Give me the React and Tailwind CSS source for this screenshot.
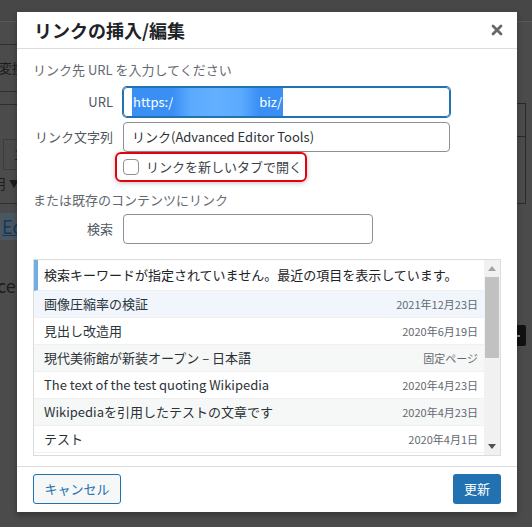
export default function App() {
  const rows = [
    { t: "画像圧縮率の検証", d: "2021年12月23日", bg: "bg-[#f0f6fc]" },
    { t: "見出し改造用", d: "2020年6月19日", bg: "bg-white" },
    { t: "現代美術館が新装オープン – 日本語", d: "固定ページ", bg: "bg-[#f6f7f7]" },
    { t: "The text of the test quoting Wikipedia", d: "2020年4月23日", bg: "bg-white" },
    { t: "Wikipediaを引用したテストの文章です", d: "2020年4月23日", bg: "bg-[#f6f7f7]" },
    { t: "テスト", d: "2020年4月1日", bg: "bg-white" },
  ];
  const font = "font-['Noto_Sans_CJK_JP','Noto_Sans',sans-serif]";
  return (
    <div className={`relative w-[532px] h-[527px] overflow-hidden bg-[#4b4b4b] ${font}`}>
      {/* dimmed editor background */}
      <div className="h-[22px] border-b border-[#5a5a5a] bg-[#474747]" />
      <div className="flex">
        <div className="w-[260px] flex flex-col">
          <div className="h-[23px] border-b border-[#2e2e2e]" />
          <div className="h-[47px] border-b border-[#2e2e2e] flex items-center">
            <span className="ml-[-1px] text-[13px] text-[#1c1c1c]">変換</span>
          </div>
          <div className="h-[13px] border-b border-[#2e2e2e]" />
          <div className="h-[34px]" />
          <div className="ml-[3px] h-[31px] w-[60px] border border-[#3c3c3c] flex items-center pl-[10px] text-[13px] text-[#1c1c1c]">
            1
          </div>
          <div className="h-[26px] flex items-center text-[14px] text-[#1c1c1c]">
            <span className="ml-[-8px]">用</span>
            <span className="ml-[3px] text-[10px]">▼</span>
          </div>
          <div className="h-[8px] border-b border-[#2e2e2e]" />
          <div className="mt-[9px] h-[27px] w-[40px] bg-[#4a5761] flex items-center">
            <span className="ml-[2px] text-[18px] text-[#173858] underline">Ed</span>
          </div>
          <div className="mt-[32px] text-[18px] text-[#1c1c1c] ml-[-3px]">ce</div>
        </div>
        <div className="flex-1 flex flex-col items-end">
          <div className="mt-[81px] mr-[6px] w-[80px] h-[101px] border border-[#2a2a2a] flex flex-col">
            <div className="h-[33px] border-b border-[#2a2a2a]" />
          </div>
          <div className="mt-[121px] mr-[6px] w-[30px] h-[21px] bg-[#111] rounded-[2px] flex items-center justify-end pr-[6px]">
            <span className="block w-[4px] h-[2px] bg-[#8a8a8a]" />
          </div>
        </div>
      </div>

      {/* modal */}
      <div className="absolute left-[17px] top-[12px] w-[500px] h-[500px] bg-white shadow-[0_3px_6px_rgba(0,0,0,0.3)] flex flex-col">
        <div className="h-[37px] shrink-0 border-b border-[#dcdcde] flex items-center justify-between pl-[17px] pr-[13px]">
          <h1 className="text-[18px] font-bold text-[#1d2327] leading-none">リンクの挿入/編集</h1>
          <svg width="14" height="14" viewBox="0 0 14 14">
            <path d="M3 3 L11 11 M11 3 L3 11" stroke="#646970" strokeWidth="2.8" strokeLinecap="round" />
          </svg>
        </div>

        <div className="flex-1 px-[16px] flex flex-col">
          <p className="mt-[11px] text-[13px] leading-[20px] text-[#646970]">リンク先 URL を入力してください</p>

          <div className="mt-[7px] flex items-center">
            <span className="w-[80px] text-right text-[13px] text-[#50575e]">URL</span>
            <div className="ml-[10px] w-[327px] h-[30px] rounded-[4px] border border-[#2271b1] shadow-[0_0_0_1px_#2271b1] flex items-center pl-[7px] text-[13px] text-white">
              <span className="w-[1px] h-[26px] bg-white" />
              <span className="h-[28px] flex items-center bg-[#3a8ff5] pl-[1px]">https:/</span>
              <span className="h-[28px] w-[86px] bg-[linear-gradient(90deg,#3a8ff5,#5aaaff_20%,#63b0ff_50%,#5aaaff_80%,#3a8ff5)]" />
              <span className="h-[28px] flex items-center bg-[#3a8ff5] pr-[1px]">biz/</span>
            </div>
          </div>

          <div className="mt-[5px] flex items-center">
            <span className="w-[80px] text-right text-[13px] text-[#50575e]">リンク文字列</span>
            <div className="ml-[10px] w-[327px] h-[30px] rounded-[4px] border border-[#8c8f94] flex items-center pl-[8px] text-[13px] text-[#2c3338]">
              リンク(Advanced Editor Tools)
            </div>
          </div>

          <div className="ml-[82px] w-[192px] h-[30px] rounded-[6px] border-2 border-[#e3000f] shadow-[0_1px_5px_rgba(0,0,0,0.25)] flex items-center pl-[6px]">
            <span className="w-[16px] h-[16px] rounded-[4px] border border-[#8c8f94] bg-white" />
            <span className="ml-[7px] text-[13px] text-[#3c434a]">リンクを新しいタブで開く</span>
          </div>

          <p className="mt-[8px] text-[13px] leading-[20px] text-[#646970]">または既存のコンテンツにリンク</p>

          <div className="mt-[4px] flex items-center">
            <span className="w-[80px] text-right text-[13px] text-[#50575e]">検索</span>
            <div className="ml-[10px] w-[250px] h-[30px] rounded-[4px] border border-[#8c8f94]" />
          </div>

          <div className="mt-[15px] w-[468px] h-[197px] border border-[#dcdcde] flex overflow-hidden bg-white">
            <div className="flex-1 flex flex-col">
              <div className="h-[31px] shrink-0 border-b border-[#f0f0f1] border-l-4 border-l-[#72aee6] flex items-center pl-[6px] text-[13px] text-[#1d2327] bg-white">
                検索キーワードが指定されていません。最近の項目を表示しています。
              </div>
              {rows.map((r) => (
                <div
                  key={r.t}
                  className={`h-[27px] shrink-0 border-b border-[#f0f0f1] flex items-center justify-between pl-[10px] pr-[6px] ${r.bg}`}
                >
                  <span className="text-[13px] text-[#2c3338]">{r.t}</span>
                  <span className="text-[11px] text-[#646970]">{r.d}</span>
                </div>
              ))}
            </div>
            <div className="w-[16px] shrink-0 bg-[#f1f1f1] flex flex-col items-center">
              <div className="h-[17px] flex items-center justify-center">
                <svg width="8" height="5" viewBox="0 0 8 5"><path d="M0 5 L4 0 L8 5 Z" fill="#a3a3a3" /></svg>
              </div>
              <div className="w-[14px] h-[81px] bg-[#c1c1c1]" />
              <div className="flex-1" />
              <div className="h-[17px] flex items-center justify-center">
                <svg width="8" height="5" viewBox="0 0 8 5"><path d="M0 0 L8 0 L4 5 Z" fill="#505050" /></svg>
              </div>
            </div>
          </div>
        </div>

        <div className="h-[46px] shrink-0 border-t border-[#dcdcde] flex items-start justify-between px-[16px] pt-[7px]">
          <button className="w-[88px] h-[30px] rounded-[3px] border border-[#2271b1] bg-[#f6f7f7] text-[13px] text-[#2271b1]">
            キャンセル
          </button>
          <button className="w-[48px] h-[30px] rounded-[3px] bg-[#2271b1] text-[13px] text-white">更新</button>
        </div>
      </div>
    </div>
  );
}
